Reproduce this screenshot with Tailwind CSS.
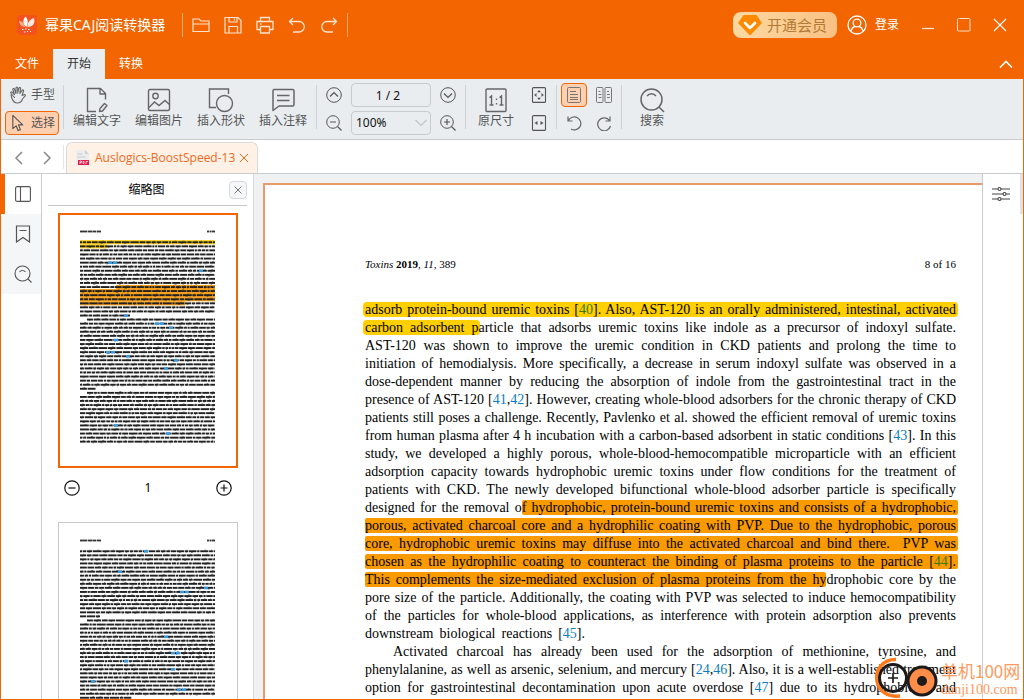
<!DOCTYPE html>
<html lang="zh-CN">
<head>
<meta charset="utf-8">
<title>幂果CAJ阅读转换器</title>
<script src="https://cdn.jsdelivr.net/npm/@tailwindcss/browser@4"></script>
</head>
<body class="h-screen overflow-hidden flex flex-col border border-t-0 border-[#f26500] bg-white text-xs text-[#333] font-['Noto_Sans','Noto_Sans_CJK_SC',sans-serif] relative">

<header class="bg-[#f26500] text-white shrink-0 h-[79px] flex flex-col">
  <div class="flex items-center h-[49px] pl-4">
    <svg class="w-5 h-5 mr-2" viewBox="0 0 20 20"><rect width="20" height="20" rx="4" fill="#f4511e"/><path d="M9.500 12C5.500 9.500 5.500 5 8.500 1.500C11 4 11.500 8 9.500 12z" fill="#fff"/><path d="M10.500 12C10.500 7.500 13 4 17 3C18.500 8 16 12 10.500 12z" fill="#ffe9de"/><path d="M8 12C4 11.500 2 9 2 5.500C5.500 6.500 7.500 8.500 8 12z" fill="#ffab80"/><path d="M5 14.500h1.500M8 14h1.500M11 14.500h1.500M7 17h1.500M10 16.500h1M13 16.500h1" stroke="#fff" stroke-width="1.200"/></svg>
    <h1 class="text-sm leading-5 whitespace-nowrap">幂果CAJ阅读转换器</h1>
    <div class="w-px h-6 bg-white/45 ml-[17px] mr-2"></div>
    <div class="flex items-center gap-3 text-[#ffe3cf]">
      <button aria-label="打开" class="w-5 h-5"><svg viewBox="0 0 20 20" fill="none" stroke="currentColor" stroke-width="1.200"><path d="M2 16.500v-12.500h6l2 2h8v10.500zM2 9h16"/></svg></button>
      <button aria-label="保存" class="w-5 h-5"><svg viewBox="0 0 20 20" fill="none" stroke="currentColor" stroke-width="1.200"><path d="M2 2.500h13l3 3v12.500h-16zM6 2.500v4.500h8v-4.500M6 18v-6.500h8.500v6.500"/><path d="M11.500 3.500v2"/></svg></button>
      <button aria-label="打印" class="w-5 h-5"><svg viewBox="0 0 20 20" fill="none" stroke="currentColor" stroke-width="1.300"><path d="M5.500 6.500v-4h9v4M5.500 14.500h-3.500v-8h16v8h-3.500M5.500 11.500h9v6.500h-9zM5 9h1.500"/></svg></button>
      <button aria-label="撤销" class="w-5 h-5"><svg viewBox="0 0 20 20" fill="none" stroke="currentColor" stroke-width="1.300"><path d="M6 3L2.500 6.500L6 10M2.500 6.500h9.500a5 5 0 0 1 0 10.500h-6"/></svg></button>
      <button aria-label="重做" class="w-5 h-5"><svg viewBox="0 0 20 20" fill="none" stroke="currentColor" stroke-width="1.300"><path d="M14 3L17.500 6.500L14 10M17.500 6.500h-9.500a5 5 0 0 0 0 10.500h6"/></svg></button>
    </div>
    <div class="w-px h-6 bg-white/45 ml-2"></div>
    <div class="ml-auto flex items-center">
      <button class="h-[26px] w-[104px] rounded-lg bg-linear-to-r from-[#fcd9a2] to-[#f9c183] text-[#b27a35] text-[15px] leading-[26px] flex items-center pl-1 gap-1 whitespace-nowrap">
        <svg class="w-[26px] h-[22px]" viewBox="0 0 26 22"><path d="M6.500 1h13l5.500 8l-12 12.500L1 9z" fill="#ff8a00"/><path d="M8 9l5 5l5-5" fill="none" stroke="#fff" stroke-width="2.600" stroke-linecap="round" stroke-linejoin="round"/></svg>开通会员</button>
      <button class="flex items-center gap-2 ml-2.5 text-xs whitespace-nowrap">
        <svg class="w-5 h-5" viewBox="0 0 20 20" fill="none" stroke="#fff" stroke-width="1.300"><circle cx="10" cy="10" r="9"/><circle cx="10" cy="8" r="3.800"/><path d="M4 16.500c.5-3 2-4.500 4-5M16 16.500c-.5-3-2-4.500-4-5"/></svg>登录</button>
      <button aria-label="最小化" class="ml-[22px] w-3.5 h-4"><svg viewBox="0 0 14 16"><path d="M1 11.500h12" stroke="#ffe9da" stroke-width="1.200"/></svg></button>
      <button aria-label="最大化" class="ml-[22px] w-3.5 h-3.5"><svg viewBox="0 0 14 14"><rect x=".500" y=".500" width="12.500" height="12.500" rx="1" fill="none" stroke="#ffe0ca"/></svg></button>
      <button aria-label="关闭" class="ml-[22px] mr-4 w-3.5 h-3.5"><svg viewBox="0 0 14 14"><path d="M1 1l12 12M13 1L1 13" stroke="#fff" stroke-width="1.100"/></svg></button>
    </div>
  </div>
  <nav class="flex h-[30px] text-xs">
    <button class="w-[52px]">文件</button>
    <button class="w-[52px] bg-[#e9edf0] text-[#333]">开始</button>
    <button class="w-[52px]">转换</button>
    <button aria-label="收起" class="ml-auto mr-2.5 w-3.5"><svg class="w-3.5 h-3.5" viewBox="0 0 14 14"><path d="M1 10.500l6-6l6 6" fill="none" stroke="#fff" stroke-width="1.600"/></svg></button>
  </nav>
</header>

<div class="shrink-0 h-[61px] bg-[#e9edf0] border-b border-[#c9cbcd] flex items-start pt-1 text-[#555] whitespace-nowrap">
  <div class="flex flex-col gap-1 ml-1 w-[54px]">
    <button class="h-6 flex items-center gap-1 pl-1"><svg class="w-[18px] h-[18px]" viewBox="0 0 18 18" fill="none" stroke="#666" stroke-width="1.100" stroke-linejoin="round" stroke-linecap="round"><path d="M5.500 11.500L2 7.500c-1-1.300.5-2 1.300-1.200L5.500 8.500L3.800 3.500c-.2-1.300 1.200-1.400 1.600-.4L7 7.500V2c0-1.400 1.700-1.400 1.700 0V7L10 2.200c.3-1.200 1.800-.8 1.600.4L10.900 7.500L13 4.400c.7-1 1.900-.3 1.500.8L13 9.500l2-.8c1.300-.5 1.900.7.900 1.500L13.500 13c-1 3-3 4-5 4s-4-.5-5.500-4.500L2 9"/></svg>手型</button>
    <button class="h-6 flex items-center gap-1 pl-1 rounded border border-[#f26500] bg-[#ffd0b0]"><svg class="w-[17px] h-[18px]" viewBox="0 0 18 18" fill="none" stroke="#555" stroke-width="1.200" stroke-linejoin="round"><path d="M3 1v14l3.500-3l2 5l2.500-1l-2-5h4.500z"/></svg>选择</button>
  </div>
  <div class="w-px h-11 bg-[#cfd2d5] mt-0.5 ml-1"></div>
  <div class="flex gap-[14px] ml-[9px] pt-1">
    <button class="w-12 flex flex-col items-center"><svg class="w-[26px] h-[26px]" viewBox="0 0 26 26" fill="none" stroke="#666" stroke-width="1.400"><path d="M12 24.500h-8.500v-23h13l5 5v6M16 1.500v5.500h5.500M15.500 24.500l.5-3l4.500-5l2.500 2l-4.500 5.500z" stroke-linejoin="round"/></svg><span class="leading-4">编辑文字</span></button>
    <button class="w-12 flex flex-col items-center"><svg class="w-[26px] h-[26px]" viewBox="0 0 26 26" fill="none" stroke="#666" stroke-width="1.400"><rect x="2.500" y="2.500" width="21" height="21" rx="1.500"/><circle cx="9.500" cy="9" r="2.700"/><path d="M3 20.500l5.500-5.500l4.500 3.500l6-5l4.500 4"/></svg><span class="leading-4">编辑图片</span></button>
    <button class="w-12 flex flex-col items-center"><svg class="w-[26px] h-[26px]" viewBox="0 0 26 26" fill="none" stroke="#666" stroke-width="1.400"><path d="M8 20.500h-6.500v-18.500h19v5"/><circle cx="16.500" cy="16.500" r="8"/></svg><span class="leading-4">插入形状</span></button>
    <button class="w-12 flex flex-col items-center"><svg class="w-[26px] h-[26px]" viewBox="0 0 26 26" fill="none" stroke="#666" stroke-width="1.500"><path d="M4 2.500h18.500q1.500 0 1.500 1.500v13.500q0 1.500-1.500 1.500h-13.500l-6 4.500v-19.500q0-1.500 1-1.500zM7 8.500h12.500M7 13.500h12.500" stroke-linejoin="round"/></svg><span class="leading-4">插入注释</span></button>
  </div>
  <div class="w-px h-11 bg-[#cfd2d5] mt-0.5 ml-[9px]"></div>
  <div class="grid grid-cols-[16px_80px_16px] gap-x-[9px] gap-y-1 ml-[9px] items-center">
    <button aria-label="上一页" class="w-4 h-4"><svg viewBox="0 0 16 16" fill="none" stroke="#555"><circle cx="8" cy="8" r="7.300"/><path d="M4 9.500l4-4l4 4" stroke-width="1.200"/></svg></button>
    <input aria-label="页码" value="1 / 2" class="w-20 h-6 rounded border border-[#c8cbce] text-center pr-1.5 text-[#111] text-xs">
    <button aria-label="下一页" class="w-4 h-4"><svg viewBox="0 0 16 16" fill="none" stroke="#555"><circle cx="8" cy="8" r="7.300"/><path d="M4 6.500l4 4l4-4" stroke-width="1.200"/></svg></button>
    <button aria-label="缩小" class="w-4 h-4"><svg viewBox="0 0 16 16" fill="none" stroke="#555"><circle cx="7" cy="7" r="6.300"/><path d="M4 7h6M11.500 11.500l4 4" stroke-width="1.200"/></svg></button>
    <div class="relative h-6"><select aria-label="缩放" class="appearance-none w-20 h-6 rounded border border-[#c8cbce] pl-1 text-[#111] text-xs"><option>100%</option></select><svg class="absolute right-1 top-2 w-3 h-2 pointer-events-none" viewBox="0 0 12 8"><path d="M.500 1l5.500 5.500L11.500 1" fill="none" stroke="#c0c4c8" stroke-width="1.200"/></svg></div>
    <button aria-label="放大" class="w-4 h-4"><svg viewBox="0 0 16 16" fill="none" stroke="#555"><circle cx="7" cy="7" r="6.300"/><path d="M4 7h6M7 4v6M11.500 11.500l4 4" stroke-width="1.200"/></svg></button>
  </div>
  <div class="w-px h-11 bg-[#cfd2d5] mt-0.5 ml-[9px]"></div>
  <button class="w-9 flex flex-col items-center ml-3 pt-1"><svg class="w-[26px] h-[26px]" viewBox="0 0 26 26" fill="none" stroke="#666" stroke-width="1.400"><rect x="3" y="2" width="20" height="22.500" rx="1"/><path d="M6.500 10.500l2-1.500v9M6.500 18h4M16.500 10.500l2-1.500v9M16.500 18h4M13.500 11.500v1.500M13.500 16v1.500"/></svg><span class="leading-4">原尺寸</span></button>
  <div class="flex flex-col gap-3 ml-[17px] pt-1">
    <button aria-label="适合页面" class="w-4 h-4"><svg viewBox="0 0 16 16"><rect x="1.500" y=".600" width="13" height="14.800" rx="1" fill="none" stroke="#555" stroke-width="1.100"/><path d="M8 3l2 2.300h-4zM8 13l2-2.300h-4zM3.200 8l2.300-2v4zM12.800 8l-2.300-2v4z" fill="#555"/></svg></button>
    <button aria-label="适合宽度" class="w-4 h-4"><svg viewBox="0 0 16 16"><rect x="1.500" y=".600" width="13" height="14.800" rx="1" fill="none" stroke="#555" stroke-width="1.100"/><path d="M3.500 8l3-2v4zM12.500 8l-3-2v4z" fill="#555"/></svg></button>
  </div>
  <div class="w-px h-11 bg-[#cfd2d5] mt-0.5 ml-[9px]"></div>
  <div class="grid grid-cols-[26px_26px] gap-x-1 gap-y-1 ml-1 justify-items-center">
    <button aria-label="单页" class="w-[26px] h-6 rounded border border-[#f26500] bg-[#ffd0b0] flex items-center justify-center"><svg class="w-4 h-4" viewBox="0 0 16 16" fill="none" stroke="#777"><rect x="1.500" y=".500" width="13" height="15" rx="1"/><path d="M4 4.500h6M4 7.500h8M4 10.500h8M4 12.500h8"/></svg></button>
    <button aria-label="双页" class="w-4 h-6"><svg viewBox="0 0 16 16" fill="none" stroke="#777"><rect x=".500" y=".500" width="6.500" height="15" rx="1"/><rect x="9" y=".500" width="6.500" height="15" rx="1"/><path d="M2.500 4.500h2M2.500 7.500h3M2.500 10.500h3M11 4.500h2M11 7.500h3M11 10.500h3"/></svg></button>
    <button aria-label="逆时针旋转" class="w-4 h-6"><svg viewBox="0 0 16 16" fill="none" stroke="#666" stroke-width="1.200"><path d="M2 1.500v4.500h4.500M2.500 5.500a6.500 6.500 0 1 1 2.500 8.500"/></svg></button>
    <button aria-label="顺时针旋转" class="w-4 h-6"><svg viewBox="0 0 16 16" fill="none" stroke="#666" stroke-width="1.200"><path d="M14 1.500v4.500h-4.500M13.500 5.500a6.500 6.500 0 1 0 1 5.500"/></svg></button>
  </div>
  <div class="w-px h-11 bg-[#cfd2d5] mt-0.5 ml-1"></div>
  <button class="w-9 flex flex-col items-center ml-3 pt-1"><svg class="w-[26px] h-[26px]" viewBox="0 0 26 26" fill="none" stroke="#666" stroke-width="1.500"><circle cx="12.500" cy="12.500" r="10.500"/><path d="M8 9c2.500-3 6.500-3 9 0M20 20l5 5"/></svg><span class="leading-4">搜索</span></button>
</div>

<div class="shrink-0 h-[34px] border-b border-[#c9cbcd] flex items-end">
  <button aria-label="后退" class="ml-3 mb-2 w-3 h-3.5"><svg viewBox="0 0 12 14"><path d="M9 1L3 7l6 6" fill="none" stroke="#888" stroke-width="1.500"/></svg></button>
  <button aria-label="前进" class="ml-4 mb-2 w-3 h-3.5"><svg viewBox="0 0 12 14"><path d="M3 1l6 6l-6 6" fill="none" stroke="#888" stroke-width="1.500"/></svg></button>
  <div class="w-px h-6 bg-[#e4e6e8] ml-2.5 mb-1"></div>
  <div class="ml-0.5 h-[31px] w-48 rounded-t-md border border-b-0 border-[#d8dade] bg-[#fff1e6] flex items-center pl-2 text-[#ec6a1c]">
    <svg class="w-3.5 h-4 mr-1.5" viewBox="0 0 14 16"><path d="M1 0h9l4 4v12h-13z" fill="#eceded"/><path d="M10 0l4 4h-4z" fill="#cfd2d5"/><path d="M2.500 4h5M2.500 7h8" stroke="#c8cbce"/><rect x="3" y="10" width="11" height="5" fill="#e5174b"/><path d="M5 14v-3h1.500v1.500h-1.500M8 11.500h1v2h-1zM11 14v-2.500h2" fill="none" stroke="#fff" stroke-width=".700"/></svg>
    <span class="whitespace-nowrap font-['Open_Sans',sans-serif]">Auslogics-BoostSpeed-13</span>
    <button aria-label="关闭标签" class="ml-auto mr-2 w-2.5 h-2.5"><svg viewBox="0 0 10 10"><path d="M1 1l8 8M9 1l-8 8" stroke="#ec6a1c"/></svg></button>
  </div>
</div>

<main class="flex-1 min-h-0 flex">
  <aside class="w-[41px] shrink-0 border-r border-[#c9cbcd] flex flex-col">
    <button aria-label="缩略图" class="h-10 border-l-4 border-[#f26500] pl-2.5"><svg class="w-4 h-4" viewBox="0 0 16 16" fill="none" stroke="#555" stroke-width="1.100"><rect x=".600" y=".600" width="14.800" height="14.800" rx="1.500"/><path d="M5.500 .500v15"/></svg></button>
    <button aria-label="书签" class="h-10 pl-3.5 bg-[#f4f6f8]"><svg class="w-4 h-[18px]" viewBox="0 0 16 18" fill="none" stroke="#555" stroke-width="1.200"><path d="M1.500 1h13v16l-6.500-4.500l-6.500 4.500zM4.500 5.500h7"/></svg></button>
    <button aria-label="搜索" class="h-10 pl-[13px] bg-[#f4f6f8]"><svg class="w-[18px] h-[18px]" viewBox="0 0 18 18" fill="none" stroke="#555" stroke-width="1.100"><circle cx="8.500" cy="8.500" r="7.500"/><path d="M5.500 7c1.500-2 4.500-2 6 0M14 14l3.500 3.500"/></svg></button>
  </aside>

  <section class="w-[212px] shrink-0 border-r border-[#d5d7d9] overflow-hidden">
    <div class="mx-1.5 h-8 border-b border-[#c4c6c8] flex items-center justify-end">
      <h2 class="flex-1 text-center pl-4 text-black">缩略图</h2>
      <button aria-label="关闭缩略图" class="w-[18px] h-[18px] rounded border border-[#d5d9de] bg-[#f5f7f9] flex items-center justify-center"><svg class="w-2 h-2" viewBox="0 0 8 8"><path d="M.500 .500l7 7M7.500 .500l-7 7" stroke="#777"/></svg></button>
    </div>
    <div class="mx-4 mt-[7px]">
      <div class="w-[180px] h-[255px] border-2 border-[#f26500] bg-white"><svg id="t1" class="w-44 h-[251px]" viewBox="0 0 176 251"></svg></div>
      <div class="h-10 flex items-center justify-between pl-1.5 pr-[5px] text-black">
        <button aria-label="缩小缩略图" class="w-4 h-4"><svg viewBox="0 0 16 16" fill="none" stroke="#111" stroke-width="1.200"><circle cx="8" cy="8" r="7.200"/><path d="M4.500 8h7"/></svg></button>
        <span>1</span>
        <button aria-label="放大缩略图" class="w-4 h-4"><svg viewBox="0 0 16 16" fill="none" stroke="#111" stroke-width="1.200"><circle cx="8" cy="8" r="7.200"/><path d="M4.500 8h7M8 4.500v7"/></svg></button>
      </div>
      <div class="mt-3.5 w-[180px] h-[255px] border border-[#c8c8c8] bg-white"><svg id="t2" class="w-[178px] h-[253px]" viewBox="-1 -1 178 253"></svg></div>
    </div>
  </section>

  <section class="flex-1 min-w-0 bg-[#f0f1f2] pl-[9px] pt-[9px] overflow-hidden">
    <article class="h-[1000px] border-l-2 border-t-2 border-[#ea9a68] bg-white pl-[100px] pt-[71px] text-black font-['Liberation_Serif',serif]">
      <div class="w-[591px] flex justify-between text-[11px] leading-4"><span><i>Toxins</i> <b>2019</b>, <i>11</i>, 389</span><span>8 of 16</span></div>
      <div class="w-[591px] mt-[29px] text-sm leading-[18px] whitespace-nowrap text-justify [text-align-last:justify] [&_a]:text-[#0b7cc0]">
        <p><span class="bg-[#ffcf00] rounded px-0.5 -mx-0.5">adsorb protein-bound uremic toxins [<a href="#r40"><span class="text-[#3c7a10]">40</span></a>]. Also, AST-120 is an orally administered, intestinal, activated</span></p>
        <p><span class="bg-[#ffcf00] rounded px-0.5 -mx-0.5">carbon adsorbent p</span>article that adsorbs uremic toxins like indole as a precursor of indoxyl sulfate.</p>
        <p>AST-120 was shown to improve the uremic condition in CKD patients and prolong the time to</p>
        <p>initiation of hemodialysis. More specifically, a decrease in serum indoxyl sulfate was observed in a</p>
        <p>dose-dependent manner by reducing the absorption of indole from the gastrointestinal tract in the</p>
        <p>presence of AST-120 [<a href="#r41">41</a>,<a href="#r42">42</a>]. However, creating whole-blood adsorbers for the chronic therapy of CKD</p>
        <p>patients still poses a challenge. Recently, Pavlenko et al. showed the efficient removal of uremic toxins</p>
        <p>from human plasma after 4 h incubation with a carbon-based adsorbent in static conditions [<a href="#r43">43</a>]. In this</p>
        <p>study, we developed a highly porous, whole-blood-hemocompatible microparticle with an efficient</p>
        <p>adsorption capacity towards hydrophobic uremic toxins under flow conditions for the treatment of</p>
        <p>patients with CKD. The newly developed bifunctional whole-blood adsorber particle is specifically</p>
        <p>designed for the removal o<span class="bg-[#f89a00] rounded-xs pr-0.5 -mr-0.5">f hydrophobic, protein-bound uremic toxins and consists of a hydrophobic,</span></p>
        <p><span class="bg-[#f89a00] rounded-xs pr-0.5 -mr-0.5">porous, activated charcoal core and a hydrophilic coating with PVP. Due to the hydrophobic, porous</span></p>
        <p><span class="bg-[#f89a00] rounded-xs pr-0.5 -mr-0.5">core, hydrophobic uremic toxins may diffuse into the activated charcoal and bind there. &nbsp;PVP was</span></p>
        <p><span class="bg-[#f89a00] rounded-xs pr-0.5 -mr-0.5">chosen as the hydrophilic coating to counteract the binding of plasma proteins to the particle [<a href="#r44"><span class="text-[#3c7a10]">44</span></a>].</span></p>
        <p><span class="bg-[#f89a00] rounded-xs">This complements the size-mediated exclusion of plasma proteins from the hy</span>drophobic core by the</p>
        <p>pore size of the particle. Additionally, the coating with PVP was selected to induce hemocompatibility</p>
        <p>of the particles for whole-blood applications, as interference with protein adsorption also prevents</p>
        <p class="w-[220px]">downstream biological reactions [<a href="#r45">45</a>].</p>
        <p class="pl-7">Activated charcoal has already been used for the adsorption of methionine, tyrosine, and</p>
        <p>phenylalanine, as well as arsenic, selenium, and mercury [<a href="#r24">24</a>,<a href="#r46">46</a>]. Also, it is a well-established treatment</p>
        <p>option for gastrointestinal decontamination upon acute overdose [<a href="#r47">47</a>] due to its hydrophobicity and</p>
      </div>
    </article>
  </section>

  <aside class="w-[41px] shrink-0 border-l border-[#c9cbcd] flex items-start">
    <button aria-label="属性" class="ml-2 mt-3 w-5 h-4"><svg viewBox="0 0 20 16" fill="none" stroke="#444" stroke-width="1.100"><path d="M1 3h6M10 3h9M1 8h11M15 8h4M1 13h6M10 13h9"/><circle cx="8.500" cy="3" r="1.500"/><circle cx="13.500" cy="8" r="1.500"/><circle cx="8.500" cy="13" r="1.500"/></svg></button>
    <div class="ml-auto w-[3px] h-10 bg-[#dfe3e8]"></div>
  </aside>
</main>

<div class="absolute right-0 bottom-0 flex items-end pointer-events-none text-[#ff9a5c]">
  <svg class="w-[66px] h-[42px]" viewBox="0 0 66 42"><path d="M21 2.500C8 2 0 13 2 24c2 11 11 16 23 15" fill="none" stroke="#ff7a1a" stroke-width="3.500"/><circle cx="18" cy="21" r="13.500" fill="none" stroke="#1d1a1a" stroke-width="3"/><path d="M18 16v10M13 21h10" stroke="#1d1a1a" stroke-width="1.700"/><circle cx="47" cy="24" r="14" fill="#ff8d4a" stroke="#1d1a1a" stroke-width="3"/><circle cx="47" cy="24" r="5" fill="#1d1a1a"/></svg>
  <div class="w-[82px] whitespace-nowrap font-['Liberation_Serif','Noto_Sans_CJK_SC',serif]">
    <div class="text-[17px] leading-5 font-['Noto_Sans_CJK_SC',sans-serif]">单机100网</div>
    <div class="text-sm leading-[18px]">danji100.com</div>
  </div>
</div>

<script>
// Miniature page previews: every line of text becomes a row of small word marks.
function preview(id, o) {
  let seed = o.seed;
  const rnd = () => (seed = (seed * 16807) % 2147483647) / 2147483647;
  const rect = (x, y, w, h, c) => `<rect x="${x.toFixed(1)}" y="${y.toFixed(1)}" width="${w.toFixed(1)}" height="${h}" fill="${c}"/>`;
  let s = '';
  [[20, 7], [27.6, 5], [33, 3], [36.6, 4.4], [147, 2], [149.6, 2], [152, 3]].forEach(m => s += rect(m[0], 15.6, m[1], 1.8, '#333'));
  for (let i = 0; i < o.lines; i++) {
    const y = 25.8 + i * 4.07;
    (o.marks[i] || []).forEach(m => s += rect(20 + m[0], y - 0.7, m[1] - m[0], 4.2, m[2]));
    const end = 20 + (o.ends[i] || 135);
    let x = 20 + (o.indents.includes(i) ? 7 : 0);
    while (x < end) {
      const w = Math.min(2 + rnd() * 7, end - x);
      s += rect(x, y + 0.5, w, 1.9, '#222');
      if (rnd() < 0.4) s += rect(x + w * 0.3, y + 2.4, w * 0.25, 0.6, '#444');
      if (rnd() < 0.5) s += rect(x + w * 0.5, y, w * 0.25, 0.6, '#444');
      x += w + 0.7;
    }
    (o.cites[i] || []).forEach(c => s += rect(20 + c, y + 0.2, 4, 2.6, '#3a9ae0'));
  }
  document.getElementById(id).innerHTML = s;
}
const Y = '#ffd21a', O = '#f7a01c';
preview('t1', { seed: 7, lines: 50, indents: [19, 37], ends: { 18: 50, 36: 16 },
  marks: { 0: [[0, 135, Y]], 1: [[0, 27, Y]], 11: [[36, 135, O]], 12: [[0, 135, O]], 13: [[0, 135, O]], 14: [[0, 135, O]], 15: [[0, 105, O]] },
  cites: { 5: [28, 33], 7: [119], 18: [44], 20: [75, 80], 21: [89], 24: [34], 27: [26, 31], 28: [46], 29: [94], 31: [84], 45: [34], 47: [86] } });
preview('t2', { seed: 31, lines: 50, indents: [17], ends: { 16: 20, 36: 52 }, marks: {},
  cites: { 0: [64], 5: [38], 9: [124], 10: [100, 105], 21: [84], 25: [91, 96], 27: [44], 29: [91], 32: [11], 34: [97, 102] } });
</script>
</body>
</html>
